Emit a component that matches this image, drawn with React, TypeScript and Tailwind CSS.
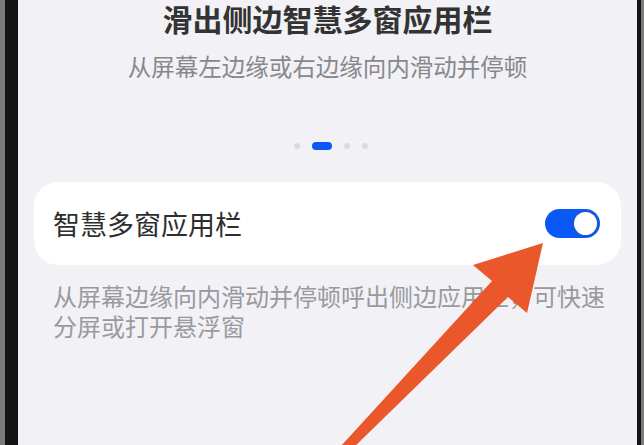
export default function App() {
  return (
    <div
      className="relative flex w-[644px] h-[445px] overflow-hidden bg-[#707070]"
      style={{ fontFamily: '"Noto Sans CJK SC", "Noto Sans", sans-serif' }}
    >
      {/* phone bezel, left */}
      <div className="w-[5px] shrink-0 bg-[#7a7a7a]" />
      <div className="w-[13px] shrink-0 bg-[#141414]" />

      {/* screen */}
      <div className="flex flex-1 flex-col items-center bg-[#f1f1f6] pt-[2px]">
        <h1 className="text-[30px] leading-[32px] font-bold text-[#333333]">滑出侧边智慧多窗应用栏</h1>
        <p className="mt-[16px] text-[23.5px] leading-[32px] text-[#88888c]">从屏幕左边缘或右边缘向内滑动并停顿</p>

        {/* pager dots */}
        <div className="mt-[60px] ml-[6px] flex h-[8px] items-center gap-3">
          <span className="h-[6px] w-[6px] rounded-full bg-[#d9d9df]" />
          <span className="h-[8px] w-[20px] rounded-full bg-[#0a59f7]" />
          <span className="h-[6px] w-[6px] rounded-full bg-[#d9d9df]" />
          <span className="h-[6px] w-[6px] rounded-full bg-[#d9d9df]" />
        </div>

        {/* setting card */}
        <div className="mt-[32px] flex h-[83px] w-[587px] items-center justify-between rounded-[24px] bg-white pl-[19px] pr-[21px]">
          <span className="text-[27px] leading-[32px] text-[#2e2e2e]">智慧多窗应用栏</span>
          <div className="flex h-[29px] w-[55px] items-center justify-end rounded-full bg-[#0a59f7] pr-[3px]">
            <div className="h-[23px] w-[23px] rounded-full bg-white ring-1 ring-[#2a55b0]" />
          </div>
        </div>

        <div className="mt-[16px] self-stretch pl-[35px] text-[24px] leading-[30px] text-[#9a9a9e]">
          <p>从屏幕边缘向内滑动并停顿呼出侧边应用栏，可快速</p>
          <p>分屏或打开悬浮窗</p>
        </div>
      </div>

      {/* phone bezel, right */}
      <div className="w-[4px] shrink-0 bg-[#141414]" />
      <div className="w-[3px] shrink-0 bg-[#7a7a7a]" />

      {/* annotation arrow */}
      <svg className="absolute inset-0" width="644" height="445" viewBox="0 0 644 445">
        <polygon
          points="543,243 527,313 508,297 349,452 341,446 492,281 473,265"
          fill="#e9572b"
        />
      </svg>
    </div>
  )
}
